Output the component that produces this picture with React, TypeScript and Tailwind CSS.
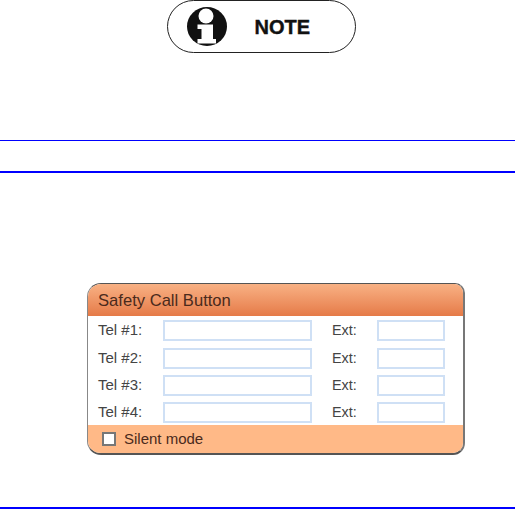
function NoteIcon() {
  return (
    <svg width="40" height="39" viewBox="0 0 40 39" className="shrink-0">
      <ellipse cx="20" cy="19.5" rx="20" ry="19.5" fill="#111" />
      <circle cx="19" cy="9" r="7.5" fill="#fff" />
      <path d="M10.5 17.5 H26 V32 H29 V36.5 H10.5 V32 H14.5 V22 H10.5 Z" fill="#fff" />
    </svg>
  )
}

const rows = ["Tel #1:", "Tel #2:", "Tel #3:", "Tel #4:"]

export default function App() {
  return (
    <main className="h-[509px] w-[519px] overflow-hidden bg-white font-['Liberation_Sans',sans-serif]">
      <div className="flex justify-center pl-[3px]">
        <div className="flex h-[53px] w-[189px] items-center rounded-[27px] border border-[#222] pl-[19px]">
          <NoteIcon />
          <span className="ml-[28px] text-[20px] leading-none font-bold text-[#111] [-webkit-text-stroke:0.4px_#111]">NOTE</span>
        </div>
      </div>

      <div className="mt-[87px] h-px w-[515px] bg-[#0000ff]" />
      <div className="mt-[30px] h-[2px] w-[515px] bg-[#0000ff]" />

      <section className="mt-[110px] ml-[87px] flex h-[172px] w-[378px] flex-col overflow-hidden rounded-tl-[14px] rounded-tr-[10px] rounded-br-[12px] rounded-bl-[14px] border border-r-2 border-b-2 border-[#555] border-l-[#888] border-r-[#777] bg-white">
        <h2 className="flex h-[32px] shrink-0 items-center bg-gradient-to-b from-[#f8b184] to-[#e57a47] pt-[2px] pl-[10px] text-[16.6px] leading-none text-[#4a2a1c]">
          Safety Call Button
        </h2>
        <div className="flex flex-1 flex-col gap-[6px] pt-[4px] pl-[10px]">
          {rows.map((r) => (
            <div key={r} className="flex h-[21px] items-center text-[15px] text-[#444] first:mb-px">
              <span className="w-[65px]">{r}</span>
              <input className="h-[21px] w-[149px] border-2 border-[#cfe0f5] bg-white outline-none" />
              <span className="ml-[20px] w-[45px] text-[14.4px]">Ext:</span>
              <input className="h-[21px] w-[68px] border-2 border-[#cfe0f5] bg-white outline-none" />
            </div>
          ))}
        </div>
        <div className="flex h-[28px] shrink-0 items-center bg-[#ffb987] pl-[14px] text-[15px] text-[#4a2a1c]">
          <span className="h-[14px] w-[14px] border-2 border-[#777] bg-white" />
          <span className="ml-[8px]">Silent mode</span>
        </div>
      </section>

      <div className="mt-[52px] h-[2px] w-[515px] bg-[#0000ff]" />
    </main>
  )
}
